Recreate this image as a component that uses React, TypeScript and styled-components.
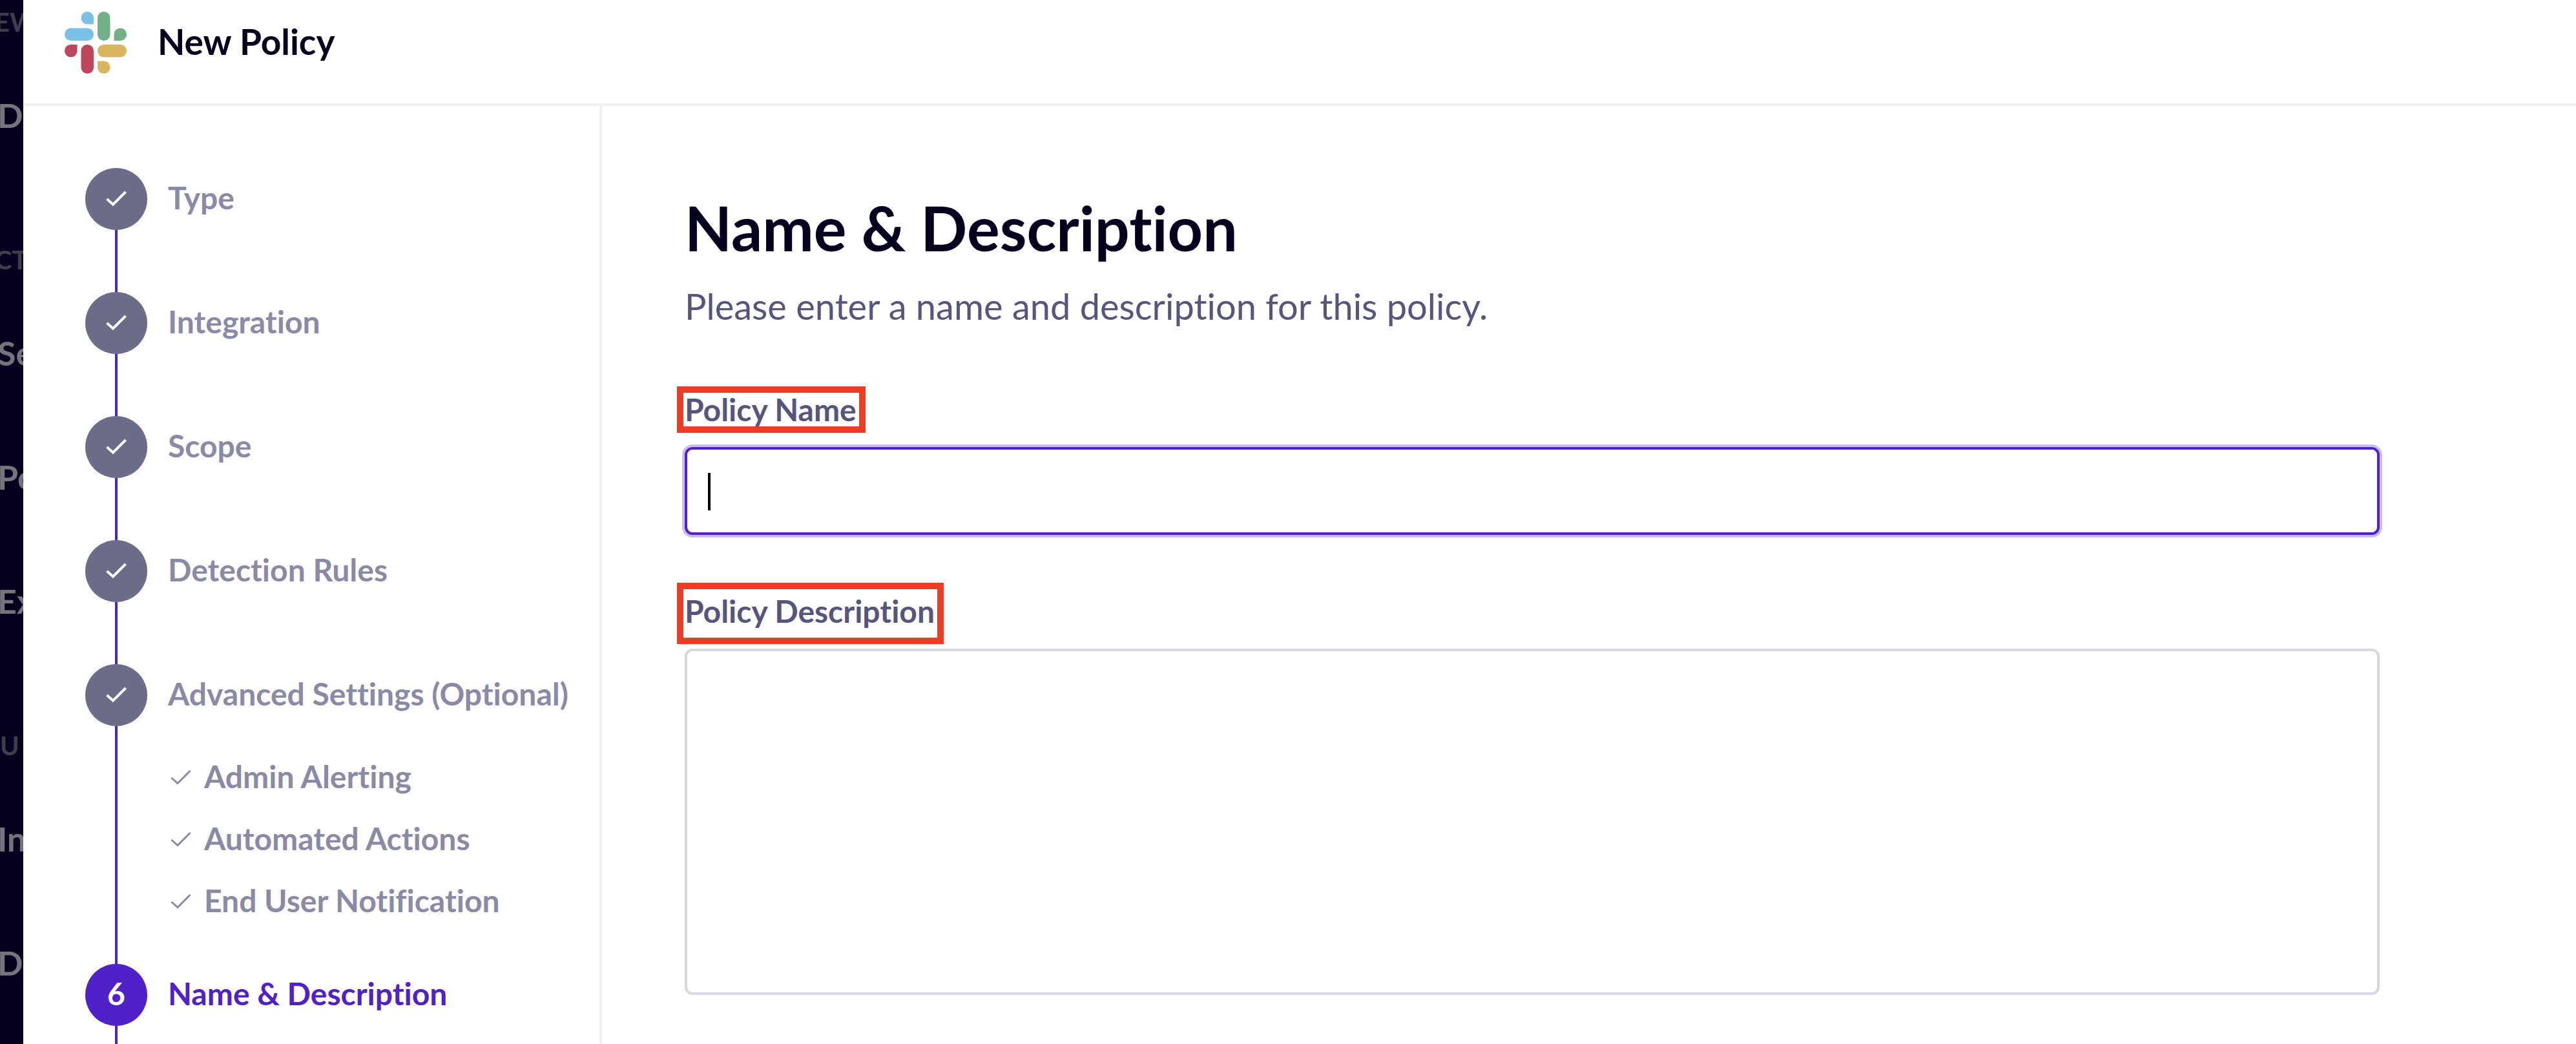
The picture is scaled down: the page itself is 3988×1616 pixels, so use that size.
import React from "react";
import styled, { createGlobalStyle } from "styled-components";

const color = {
  ink: "#05001e",
  body: "#56557e",
  muted: "#8a89a6",
  done: "#6b6b8a",
  accent: "#5020c8",
  line: "#f0f0f5",
  field: "#d6d6e0",
  mark: "#ea3f24",
};

const GlobalStyle = createGlobalStyle`
  *, *::before, *::after { box-sizing: border-box; }
  body {
    margin: 0;
    background: #fff;
    color: ${color.ink};
    font-family: Lato, "Open Sans", sans-serif;
    font-size: 48px;
    line-height: 64px;
    font-variant-ligatures: none;
  }
`;

const Page = styled.div`
  display: flex;
  height: 100vh;
  overflow: hidden;
`;

const Rail = styled.nav`
  flex: none;
  width: 36px;
  overflow: hidden;
  background: ${color.ink};
`;

const RailCaption = styled.div<{ $first?: boolean; $cut?: boolean }>`
  display: flex;
  align-items: flex-end;
  height: ${(p) => (p.$first ? 84 : 176)}px;
  margin-left: ${(p) => (p.$cut ? -8 : 0)}px;
  padding-bottom: 24px;
  color: #413d4d;
  font-size: 40px;
  font-weight: 700;
  line-height: 52px;
  white-space: nowrap;
`;

const RailLink = styled.a`
  display: flex;
  align-items: center;
  height: 192px;
  margin-left: -4px;
  padding-bottom: 4px;
  color: #75737c;
  font-size: 52px;
  font-weight: 700;
  text-decoration: none;
  white-space: nowrap;
`;

const Panel = styled.div`
  flex: 1;
  min-width: 0;
  display: flex;
  flex-direction: column;
`;

const Header = styled.header`
  flex: none;
  display: flex;
  align-items: flex-start;
  gap: 48px;
  height: 164px;
  padding: 18px 64px 0;
  border-bottom: 4px solid ${color.line};
`;

const HeaderTitle = styled.span`
  font-size: 55px;
  font-weight: 700;
  line-height: 92px;
`;

const Body = styled.div`
  flex: 1;
  min-height: 0;
  display: flex;
`;

const Sidebar = styled.aside`
  flex: none;
  width: 896px;
  padding: 96px 0 0 96px;
  border-right: 4px solid ${color.line};
  overflow: hidden;
`;

const Steps = styled.ol`
  margin: 0;
  padding: 0;
  list-style: none;
`;

const Step = styled.li`
  display: grid;
  grid-template-columns: 96px 1fr;
  column-gap: 32px;
`;

const Track = styled.div`
  display: flex;
  flex-direction: column;
  align-items: center;
`;

const Bullet = styled.span<{ $active?: boolean }>`
  flex: none;
  display: flex;
  align-items: center;
  justify-content: center;
  width: 96px;
  height: 96px;
  border-radius: 50%;
  background: ${(p) => (p.$active ? color.accent : color.done)};
  color: #fff;
`;

const StepNumber = styled.span`
  padding-bottom: 4px;
  font-weight: 700;
`;

const Connector = styled.span`
  flex: 1;
  width: 4px;
  min-height: 96px;
  background: ${color.accent};
`;

const StepLabel = styled.a<{ $active?: boolean }>`
  display: block;
  padding-bottom: 4px;
  color: ${(p) => (p.$active ? color.accent : color.muted)};
  font-weight: 700;
  line-height: 92px;
  text-decoration: none;
  white-space: nowrap;
`;

const SubSteps = styled.ul`
  margin: 0;
  padding: 32px 0 48px;
  list-style: none;
`;

const SubStep = styled.li`
  display: flex;
  align-items: center;
  gap: 16px;
  height: 96px;
  color: ${color.muted};
`;

const Main = styled.main`
  flex: 1;
  min-width: 0;
  padding: 128px 304px 0 128px;
`;

const Title = styled.h1`
  margin: 0 0 26px;
  font-size: 95px;
  font-weight: 700;
  line-height: 120px;
`;

const Intro = styled.p`
  margin: 0 0 92px;
  color: ${color.body};
  font-size: 56px;
  line-height: 72px;
`;

const Field = styled.div`
  margin-bottom: 86px;
`;

const FieldLabel = styled.label`
  position: relative;
  display: block;
  width: fit-content;
  margin-bottom: 26px;
  color: ${color.body};
  font-weight: 700;
`;

const Mark = styled.span<{ $top: number; $bottom: number }>`
  position: absolute;
  top: -${(p) => p.$top}px;
  bottom: -${(p) => p.$bottom}px;
  left: -12px;
  right: -14px;
  border: 10px solid ${color.mark};
`;

const InputWrap = styled.div`
  position: relative;
`;

const Caret = styled.span`
  position: absolute;
  top: 40px;
  left: 36px;
  width: 4px;
  height: 58px;
  background: #000;
`;

const NameInput = styled.input`
  display: block;
  width: 100%;
  height: 136px;
  padding: 0 32px;
  border: 4px solid ${color.accent};
  border-radius: 12px;
  outline: none;
  background: #fff;
  box-shadow: 0 0 0 4px #c9bcee;
  caret-color: transparent;
  font: inherit;
`;

const DescriptionInput = styled.textarea`
  display: block;
  width: 100%;
  height: 536px;
  padding: 32px;
  border: 4px solid ${color.field};
  border-radius: 12px;
  outline: none;
  background: #fff;
  font: inherit;
  resize: none;
`;

function SlackLogo() {
  return (
    <svg width="96" height="96" viewBox="0 0 96 96" aria-label="Slack" role="img">
      <g fill="#7dc0e7">
        <path d="M35.250 0a9.750 9.750 0 0 1 9.750 9.750V19.500H35.250a9.750 9.750 0 0 1 0-19.500z" />
        <rect x="0" y="25.500" width="45" height="19.500" rx="9.750" />
      </g>
      <g fill="#74b087">
        <rect x="51" y="0" width="19.500" height="45" rx="9.750" />
        <path d="M76.500 45V35.250a9.750 9.750 0 1 1 9.750 9.750z" />
      </g>
      <g fill="#dbb55e">
        <rect x="51" y="51" width="45" height="19.500" rx="9.750" />
        <path d="M51 76.500h9.750a9.750 9.750 0 1 1-9.750 9.750z" />
      </g>
      <g fill="#bf455d">
        <rect x="25.500" y="51" width="19.500" height="45" rx="9.750" />
        <path d="M19.500 51v9.750a9.750 9.750 0 1 1-9.750-9.750z" />
      </g>
    </svg>
  );
}

function Check({ thin }: { thin?: boolean }) {
  return (
    <svg width="40" height="40" viewBox="0 0 40 40" fill="none" aria-hidden="true">
      <path
        d="M5.500 20L15 28.500L34.500 9"
        stroke="currentColor"
        strokeWidth={thin ? 3 : 4}
      />
    </svg>
  );
}

const rail = [
  { caption: "EW", cut: true, links: ["D"] },
  { caption: "CT", cut: true, links: ["Se", "Po", "Ex"] },
  { caption: "U", cut: false, links: ["In", "D"] },
];

const steps: { label: string; children?: string[] }[] = [
  { label: "Type" },
  { label: "Integration" },
  { label: "Scope" },
  { label: "Detection Rules" },
  {
    label: "Advanced Settings (Optional)",
    children: ["Admin Alerting", "Automated Actions", "End User Notification"],
  },
  { label: "Name & Description" },
];

const current = 5;

export default function App() {
  return (
    <>
      <GlobalStyle />
      <Page>
        <Rail>
          {rail.map((group, g) => (
            <React.Fragment key={group.caption}>
              <RailCaption $first={g === 0} $cut={group.cut}>
                {group.caption}
              </RailCaption>
              {group.links.map((link) => (
                <RailLink href="#" key={link}>
                  {link}
                </RailLink>
              ))}
            </React.Fragment>
          ))}
        </Rail>
        <Panel>
          <Header>
            <SlackLogo />
            <HeaderTitle>New Policy</HeaderTitle>
          </Header>
          <Body>
            <Sidebar>
              <Steps>
                {steps.map((step, i) => (
                  <Step key={step.label}>
                    <Track>
                      <Bullet $active={i === current}>
                        {i === current ? <StepNumber>{i + 1}</StepNumber> : <Check />}
                      </Bullet>
                      <Connector />
                    </Track>
                    <div>
                      <StepLabel href="#" $active={i === current}>
                        {step.label}
                      </StepLabel>
                      {step.children && (
                        <SubSteps>
                          {step.children.map((child) => (
                            <SubStep key={child}>
                              <Check thin />
                              <StepLabel href="#">{child}</StepLabel>
                            </SubStep>
                          ))}
                        </SubSteps>
                      )}
                    </div>
                  </Step>
                ))}
              </Steps>
            </Sidebar>
            <Main>
              <Title>Name &amp; Description</Title>
              <Intro>Please enter a name and description for this policy.</Intro>
              <Field>
                <FieldLabel htmlFor="policy-name">
                  Policy Name
                  <Mark $top={4} $bottom={4} />
                </FieldLabel>
                <InputWrap>
                  <NameInput id="policy-name" type="text" />
                  <Caret />
                </InputWrap>
              </Field>
              <Field>
                <FieldLabel htmlFor="policy-description">
                  Policy Description
                  <Mark $top={12} $bottom={19} />
                </FieldLabel>
                <DescriptionInput id="policy-description" />
              </Field>
            </Main>
          </Body>
        </Panel>
      </Page>
    </>
  );
}
